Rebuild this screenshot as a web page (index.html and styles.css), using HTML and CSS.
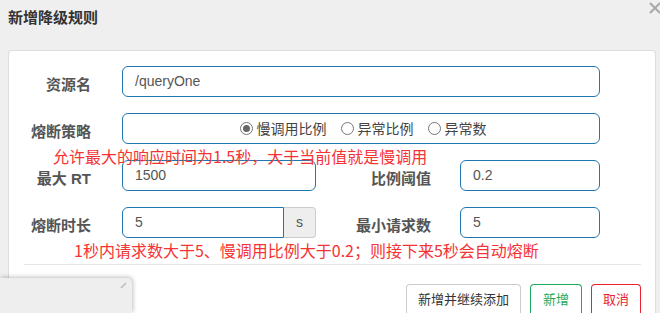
FILE: index.html
```html
<!DOCTYPE html>
<html lang="zh-CN">
<head>
    <meta charset="UTF-8">
    <title>新增降级规则</title>
    <link rel="stylesheet" href="styles.css">
</head>
<body>
    <div class="dialog">
        <div class="dialog-header">
            <h4>新增降级规则</h4>
            <svg class="close" width="12" height="12" viewBox="0 0 12 12"><path d="M1 1 L11 11 M11 1 L1 11" stroke="#aaa" stroke-width="2.2"/></svg>
        </div>

        <div class="panel">
            <div class="form-row">
                <label class="label">资源名</label>
                <div class="input wide">/queryOne</div>
            </div>

            <div class="form-row">
                <label class="label">熔断策略</label>
                <div class="input wide radios">
                    <span class="radio checked"></span>慢调用比例
                    <span class="radio"></span>异常比例
                    <span class="radio"></span>异常数
                </div>
            </div>
            <div class="note note-1">允许最大的响应时间为1.5秒，大于当前值就是慢调用</div>

            <div class="form-row">
                <label class="label">最大 RT</label>
                <div class="input mid">1500</div>
                <label class="label right">比例阈值</label>
                <div class="input small">0.2</div>
            </div>

            <div class="form-row">
                <label class="label">熔断时长</label>
                <div class="group">
                    <div class="input addon-input">5</div>
                    <div class="addon">s</div>
                </div>
                <label class="label right">最小请求数</label>
                <div class="input small">5</div>
            </div>
            <div class="note note-2">1秒内请求数大于5、慢调用比例大于0.2；则接下来5秒会自动熔断</div>

            <div class="divider"></div>

            <div class="footer">
                <button class="btn">新增并继续添加</button>
                <button class="btn btn-green">新增</button>
                <button class="btn btn-red">取消</button>
            </div>
        </div>
    </div>

    <div class="floating">
        <svg class="resize" width="7" height="7" viewBox="0 0 7 7"><path d="M1 6 L6 1" stroke="#bbb" stroke-width="1.5"/></svg>
    </div>
</body>
</html>
```

FILE: styles.css
```css
* {
    margin: 0;
    padding: 0;
    box-sizing: border-box;
}

body {
    font-family: "Liberation Sans", "Noto Sans CJK SC", sans-serif;
    background: #efefef;
    color: #555;
    width: 660px;
    height: 313px;
    overflow: hidden;
}

.dialog-header {
    display: flex;
    justify-content: space-between;
    align-items: flex-start;
    height: 50px;
    padding: 9px 0 0 8px;
}

.dialog-header h4 {
    font-size: 15px;
    font-weight: bold;
    color: #333;
    line-height: 18px;
}

.close {
    margin: -6px 0 0 0;
    position: relative;
    top: -1px;
    left: 1px;
}

.panel {
    margin-left: 8px;
    width: 648px;
    height: 263px;
    background: white;
    border: 1px solid #ddd;
    border-bottom: none;
    border-radius: 4px 4px 0 0;
    padding-top: 15px;
}

.form-row {
    display: flex;
    align-items: center;
    height: 31px;
    margin-bottom: 16px;
}

.label {
    width: 82px;
    text-align: right;
    font-size: 15px;
    font-weight: bold;
    color: #555;
    margin-right: 31px;
    padding-top: 3px;
}

.label.right {
    width: 115px;
    margin-right: 29px;
}

.input {
    height: 31px;
    border: 1px solid #1f77b0;
    border-radius: 6px;
    padding-left: 12px;
    font-size: 14px;
    line-height: 29px;
    color: #555;
}

.wide {
    width: 478px;
}

.mid {
    width: 194px;
}

.small {
    width: 140px;
}

.radios {
    display: flex;
    align-items: center;
    justify-content: center;
    padding-left: 4px;
    font-family: "Noto Sans CJK SC", "Liberation Sans", sans-serif;
    font-size: 14px;
    color: #444;
}

.radio {
    display: inline-block;
    width: 13px;
    height: 13px;
    border: 1px solid #777;
    border-radius: 50%;
    margin: 0 4px 0 14px;
    position: relative;
}

.radio:first-child {
    margin-left: 0;
}

.radio.checked::after {
    content: "";
    position: absolute;
    left: 2px;
    top: 2px;
    width: 7px;
    height: 7px;
    border-radius: 50%;
    background: #666;
}

.note {
    color: #f53333;
    font-size: 16px;
    line-height: 16px;
    height: 16px;
    position: relative;
    z-index: 1;
    font-family: "Noto Sans CJK SC", "Liberation Sans", sans-serif;
}

.note-1 {
    margin: -12px 0 -4px 44px;
}

.note-2 {
    margin: -12px 0 0 65px;
}

.group {
    display: flex;
    width: 194px;
}

.addon-input {
    width: 162px;
    border-radius: 6px 0 0 6px;
}

.addon {
    width: 32px;
    height: 31px;
    background: #eee;
    border: 1px solid #ccc;
    border-left: none;
    border-radius: 0 4px 4px 0;
    text-align: center;
    font-size: 14px;
    line-height: 29px;
    color: #555;
}

.divider {
    margin: 6px 14px 0 15px;
    border-top: 1px solid #e5e5e5;
}

.footer {
    display: flex;
    justify-content: flex-end;
    gap: 9px;
    padding: 19px 14px 0 0;
}

.btn {
    height: 29px;
    padding: 0 11px;
    background: white;
    border: 1px solid #ccc;
    border-bottom: none;
    border-radius: 4px 4px 0 0;
    font-family: "Noto Sans CJK SC", "Liberation Sans", sans-serif;
    font-size: 13px;
    line-height: 28px;
    color: #333;
}

.btn-green {
    border-color: #1ba95b;
    color: #1ba95b;
    width: 52px;
}

.btn-red {
    border-color: #ec2233;
    color: #ec2233;
    width: 50px;
}

.floating {
    position: absolute;
    left: 0;
    top: 278px;
    width: 132px;
    height: 35px;
    background: #eeeeee;
    border-radius: 0 5px 0 0;
    box-shadow: 1px -1px 4px rgba(0,0,0,0.25);
}

.resize {
    position: absolute;
    right: 5px;
    top: 4px;
}
```
